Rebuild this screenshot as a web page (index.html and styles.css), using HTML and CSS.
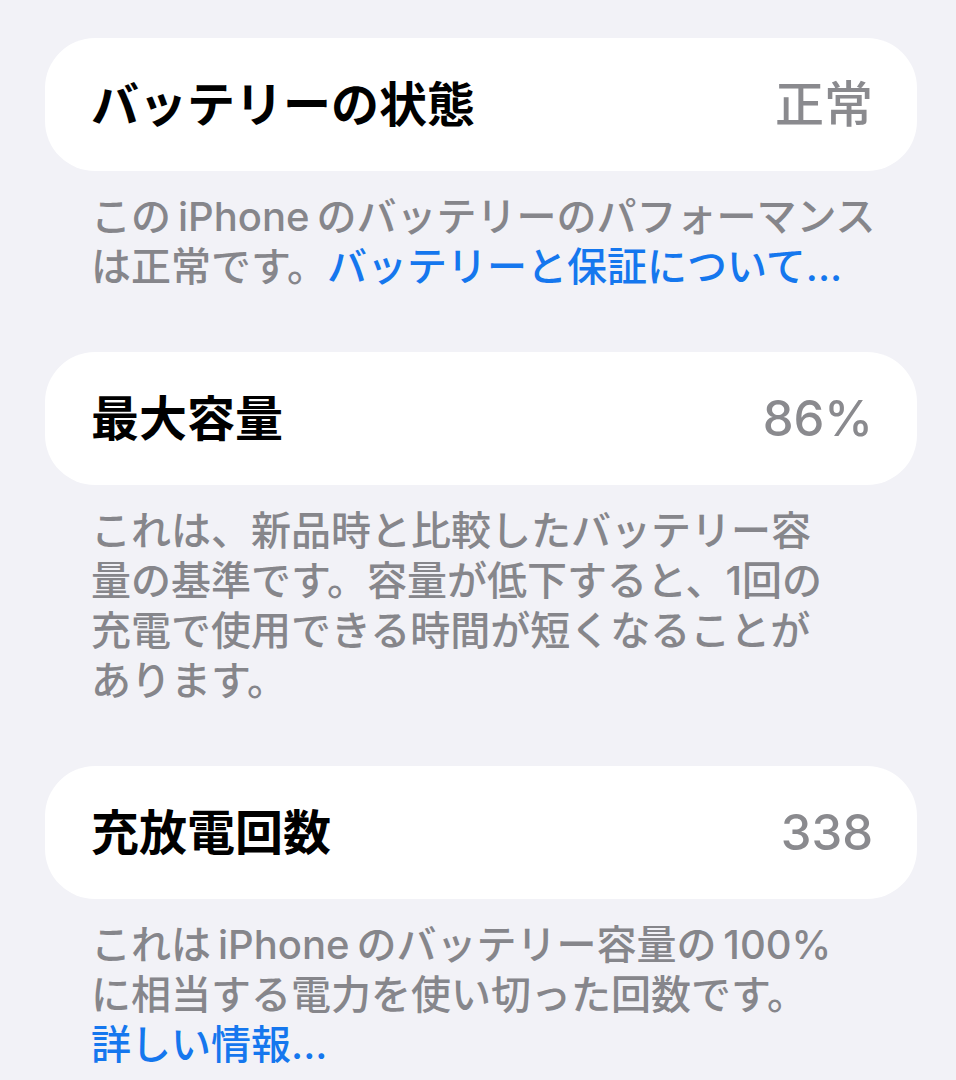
FILE: index.html
```html
<!DOCTYPE html>
<html lang="ja">
<head>
    <meta charset="UTF-8">
    <meta name="viewport" content="width=device-width, initial-scale=1.0">
    <title>バッテリーの状態</title>
    <link rel="stylesheet" href="styles.css">
</head>
<body>
    <div class="page">
        <div class="section">
            <div class="row">
                <span class="label">バッテリーの状態</span>
                <span class="value">正常</span>
            </div>
            <p class="footer">この&thinsp;iPhone&thinsp;のバッテリーのパフォーマンス<br>は正常です。<a href="#">バッテリーと保証について...</a></p>
        </div>

        <div class="section">
            <div class="row">
                <span class="label">最大容量</span>
                <span class="value">86%</span>
            </div>
            <p class="footer">これは、新品時と比較したバッテリー容<br>量の基準です。容量が低下すると、1回の<br>充電で使用できる時間が短くなることが<br>あります。</p>
        </div>

        <div class="section">
            <div class="row">
                <span class="label">充放電回数</span>
                <span class="value">338</span>
            </div>
            <p class="footer">これは&thinsp;iPhone&thinsp;のバッテリー容量の&thinsp;100%<br>に相当する電力を使い切った回数です。<br><a href="#">詳しい情報...</a></p>
        </div>
    </div>
</body>
</html>
```

FILE: styles.css
```css
body {
    margin: 0;
    background: #f2f2f7;
    font-family: "Inter", "Noto Sans CJK JP", sans-serif;
}
.page {
    padding: 38px 39px 0 45px;
}
.section + .section {
    margin-top: 60px;
}
.row {
    display: flex;
    justify-content: space-between;
    align-items: center;
    height: 133px;
    padding: 0 44px 0 46px;
    background: white;
    border-radius: 50px;
    line-height: 1;
}
.label {
    font-size: 48px;
    font-weight: bold;
    color: #000;
}
.value {
    font-size: 49px;
    font-weight: 500;
    color: #8a8a8e;
}
.footer {
    margin: 0;
    padding: 21px 46px 0;
    font-size: 40px;
    font-weight: 500;
    line-height: 50px;
    color: #86868b;
    white-space: nowrap;
}
.footer a {
    color: #1577ee;
    text-decoration: none;
}
```
